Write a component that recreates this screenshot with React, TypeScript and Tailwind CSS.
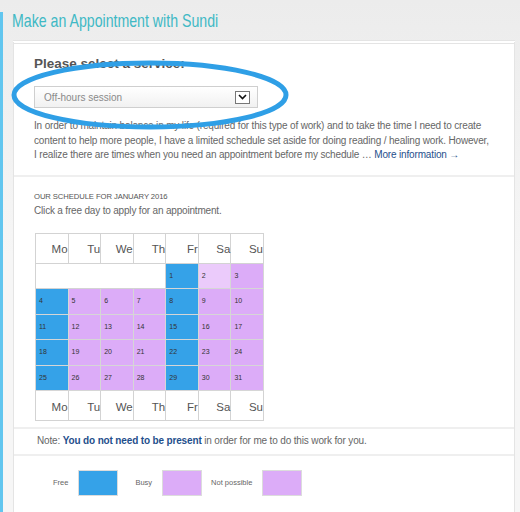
import React from 'react';

type Kind = 'free' | 'busy' | 'none';

const dayNames = ['Mo', 'Tu', 'We', 'Th', 'Fr', 'Sa', 'Su'];

const kindClass: Record<Kind, string> = {
  free: 'bg-[#35a2e8]',
  busy: 'bg-[#dcacf8]',
  none: 'bg-[#ebcbfb]',
};

function kindOf(day: number): Kind {
  if (day === 2) return 'none';
  const dow = (day + 3) % 7; // 0 = Monday (Jan 4 2016 is a Monday)
  return dow === 0 || dow === 4 ? 'free' : 'busy';
}

function DayCell({ day }: { day: number }) {
  return (
    <td className={`h-[25.5px] border border-[#d6d6d6] pl-[3px] align-middle text-[7px] text-[#333] ${kindClass[kindOf(day)]}`}>
      {day}
    </td>
  );
}

function HeadRow() {
  return (
    <tr>
      {dayNames.map((d) => (
        <td key={d} className="h-[30px] border border-[#d3d3d3] bg-white pt-[4px] text-right text-[11.5px] text-[#555]">
          {d}
        </td>
      ))}
    </tr>
  );
}

function Calendar() {
  const weeks: number[][] = [];
  for (let s = 4; s <= 31; s += 7) weeks.push([s, s + 1, s + 2, s + 3, s + 4, s + 5, s + 6].filter((d) => d <= 31));
  return (
    <table className="mt-[15px] ml-[1px] w-[229px] table-fixed border-collapse">
      <tbody>
        <HeadRow />
        <tr>
          <td colSpan={4} className="border border-[#d3d3d3] bg-white" />
          {[1, 2, 3].map((d) => (
            <DayCell key={d} day={d} />
          ))}
        </tr>
        {weeks.map((w) => (
          <tr key={w[0]}>
            {w.map((d) => (
              <DayCell key={d} day={d} />
            ))}
          </tr>
        ))}
        <HeadRow />
      </tbody>
    </table>
  );
}

function Legend({ label, color, className = '' }: { label: string; color: string; className?: string }) {
  return (
    <div className={`flex items-center ${className}`}>
      <span className="text-[7.5px] text-[#666]">{label}</span>
      <span className={`ml-[10px] h-[26px] w-[40px] border border-[#dcdcdc] ${color}`} />
    </div>
  );
}

export default function App() {
  return (
    <div className="relative flex h-[512px] w-[520px] overflow-hidden bg-gradient-to-b from-[#ececec] via-[#f6f6f6] to-[#f6f6f6] font-['Liberation_Sans',Arial,sans-serif]">
      <div className="mt-[12px] w-[3px] shrink-0 bg-[#62c6ef]" />
      <div className="flex-1 pl-[9px] pr-[5px]">
        <h1 className="origin-left scale-x-[0.745] whitespace-nowrap pt-[9px] text-[19px] leading-[24px] text-[#40b9c5]">
          Make an Appointment with Sundi
        </h1>
        <div className="mt-[7px] ml-[1px] border border-t-[4px] border-double border-[#e4e4e4] bg-white">
          <section className="border-b-2 border-[#efefef] px-[20px] pt-[10px] pb-[12px]">
            <h2 className="text-[13.5px] font-bold leading-[20px] text-[#555]">Please select a service:</h2>
            <div className="mt-[12px] flex h-[22px] w-[224px] items-center justify-between border border-[#cfcfcf] bg-gradient-to-b from-white to-[#f1f1f1] pl-[9px] pr-[7px]">
              <span className="text-[10px] text-[#8a8a8a]">Off-hours session</span>
              <span className="flex h-[13px] w-[15px] items-center justify-center border border-[#777] bg-white">
                <svg width="9" height="6" viewBox="0 0 9 6">
                  <path d="M1 1l3.5 3.5L8 1" fill="none" stroke="#111" strokeWidth="1.6" />
                </svg>
              </span>
            </div>
            <p className="mt-[11px] text-[10px] leading-[14.5px] tracking-[-0.16px] text-[#666]">
              In order to maintain balance in my life (required for this type of work) and to take the time I need to create content to help more people, I have a limited schedule set aside for doing reading / healing work. However, I realize there are times when you need an appointment before my schedule …{' '}
              <a className="text-[#1f4f8c]">More information →</a>
            </p>
          </section>
          <section className="border-b-2 border-[#efefef] px-[20px] pt-[15px] pb-[6px]">
            <div className="text-[7.7px] leading-[10px] tracking-[-0.1px] text-[#555]">OUR SCHEDULE FOR JANUARY 2016</div>
            <div className="mt-[2px] text-[10px] leading-[14px] tracking-[-0.18px] text-[#666]">Click a free day to apply for an appointment.</div>
            <Calendar />
          </section>
          <section className="border-b-2 border-[#efefef] px-[23px] pt-[4px] pb-[6px]">
            <p className="text-[10px] leading-[15px] tracking-[-0.15px] text-[#666]">
              Note: <b className="text-[#1f4f8c]">You do not need to be present</b> in order for me to do this work for you.
            </p>
          </section>
          <section className="flex items-center pl-[39px] pt-[14px] pb-[20px]">
            <Legend label="Free" color="bg-[#35a2e8]" />
            <Legend label="Busy" color="bg-[#dcacf8]" className="ml-[17px]" />
            <Legend label="Not possible" color="bg-[#dcacf8]" className="ml-[9px]" />
          </section>
        </div>
      </div>
      <svg className="pointer-events-none absolute left-0 top-0" width="520" height="512" viewBox="0 0 520 512">
        <ellipse cx="150" cy="95" rx="136" ry="32" fill="none" stroke="#2f9fe6" strokeWidth="5" />
      </svg>
    </div>
  );
}
